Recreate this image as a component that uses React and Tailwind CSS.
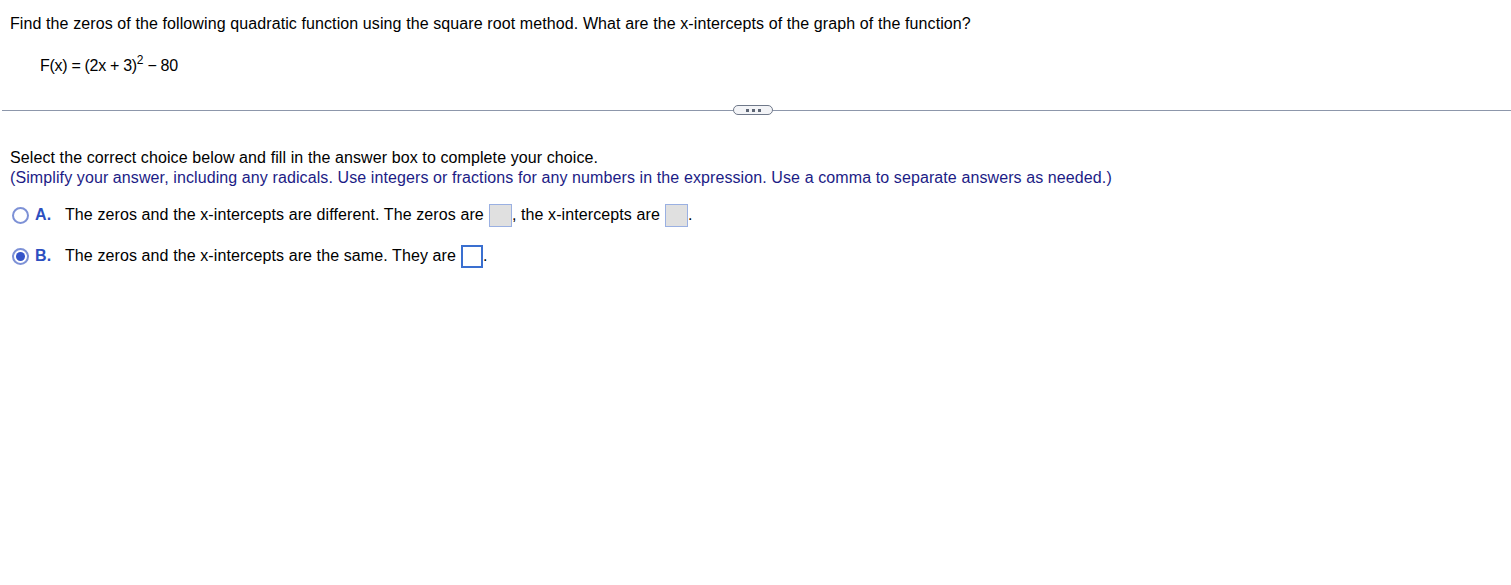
export default function App() {
  return (
    <div className="min-h-[585px] bg-white text-[16px] tracking-[0.1px] text-black" style={{ fontFamily: '"Liberation Sans", Arial, sans-serif' }}>
      <div className="px-[10px] pt-[14px]">
        <p className="leading-[20px]">
          Find the zeros of the following quadratic function using the square root method. What are the x-intercepts of the graph of the function?
        </p>
        <p className="mt-[22px] pl-[30px] leading-[20px] tracking-[-0.3px]">
          F(x) = (2x + 3)<sup className="relative -top-[7px] text-[12px]">2</sup> − 80
        </p>
      </div>

      <div className="mt-[29px] flex items-center">
        <div className="ml-[2px] h-px w-[731px] bg-[#8d97ab]" />
        <div className="flex h-[10px] w-[40px] items-center justify-center gap-[3px] rounded-full border border-[#6f7889] bg-[#f3f4f7]">
          <span className="h-[3px] w-[3px] bg-[#5e6675]" />
          <span className="h-[3px] w-[3px] bg-[#5e6675]" />
          <span className="h-[3px] w-[3px] bg-[#5e6675]" />
        </div>
        <div className="h-px flex-1 bg-[#8d97ab]" />
      </div>

      <div className="px-[10px] pt-[33px]">
        <p className="leading-[20px]">Select the correct choice below and fill in the answer box to complete your choice.</p>
        <p className="leading-[20px] text-[#1c1c86]">
          (Simplify your answer, including any radicals. Use integers or fractions for any numbers in the expression. Use a comma to separate answers as needed.)
        </p>

        <div className="mt-[15px] flex flex-col gap-[17px]">
          <div className="flex items-center">
            <span className="ml-[2px] h-[17px] w-[17px] rounded-full border-2 border-[#7d91d6]" />
            <span className="ml-[6px] w-[30px] font-bold text-[#2d4fc0]">A.</span>
            <span>The zeros and the x-intercepts are different. The zeros are</span>
            <span className="ml-[5px] h-[23px] w-[23px] border border-[#9ab0e2] bg-[#e0e0e0]" />
            <span>, the x-intercepts are</span>
            <span className="ml-[5px] h-[23px] w-[23px] border border-[#9ab0e2] bg-[#e0e0e0]" />
            <span>.</span>
          </div>
          <div className="flex items-center">
            <span className="ml-[2px] flex h-[17px] w-[17px] items-center justify-center rounded-full border-2 border-[#7d91d6]">
              <span className="h-[9px] w-[9px] rounded-full bg-[#3554c9]" />
            </span>
            <span className="ml-[6px] w-[30px] font-bold text-[#2d4fc0]">B.</span>
            <span>The zeros and the x-intercepts are the same. They are</span>
            <span className="ml-[5px] h-[23px] w-[22px] border-2 border-[#3a6fd0] bg-white" />
            <span>.</span>
          </div>
        </div>
      </div>
    </div>
  );
}
